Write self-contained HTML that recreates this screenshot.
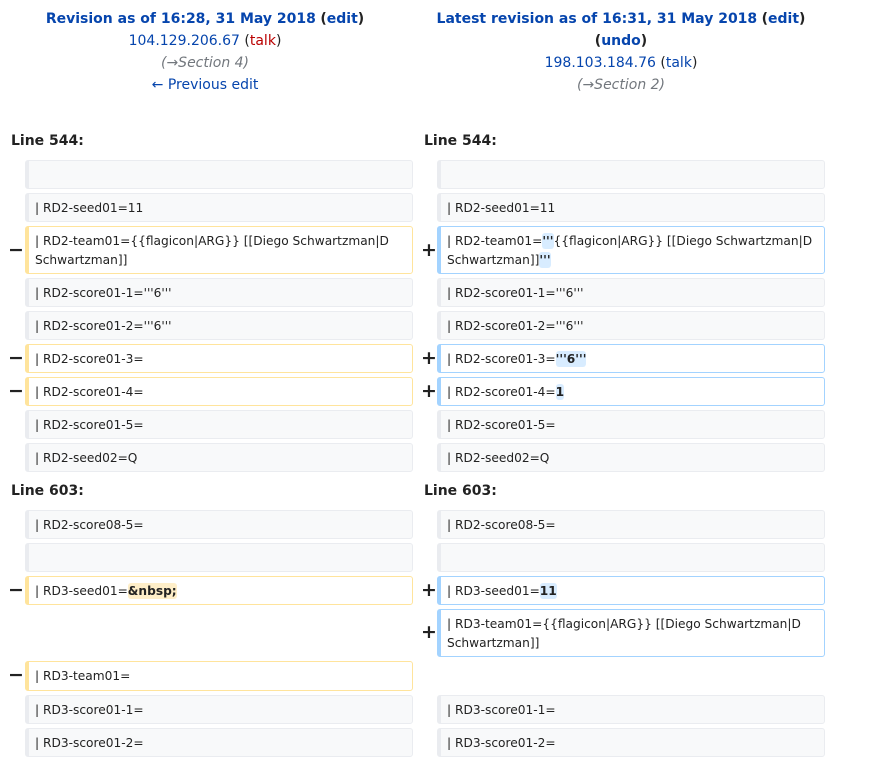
<!DOCTYPE html>
<html><head><meta charset="utf-8"><style>
body{margin:0;width:874px;height:761px;background:#fff;font-family:"DejaVu Sans","Liberation Sans",sans-serif;color:#222;position:relative;overflow:hidden}
.h{position:absolute;text-align:center;font-size:14px;line-height:22px;width:420px}
.h b{color:#0645ad}
a{color:#0645ad;text-decoration:none}
.red{color:#ba0000}
.i{font-style:italic;color:#72777d}
.ln{position:absolute;font-weight:bold;font-size:14px}
.b{position:absolute;box-sizing:border-box;width:388px;border:1px solid #eaecf0;border-left-width:4px;border-radius:3px;background:#f8f9fa;font-size:12.2px;line-height:19px;padding:5px 0 0 6px;color:#222}
.l{left:25px}.r{left:437px}
.d{border-color:#ffe49c;background:#fff}
.a{border-color:#a3d3ff;background:#fff}
.ma{background:#d8ecff;font-weight:bold;border-radius:3px;padding:1px 0}
.md{background:#feeec8;font-weight:bold;border-radius:3px;padding:1px 0}
.m{position:absolute;font-weight:bold;font-size:19px;line-height:19px}
</style></head><body>
<div class="h" style="left:-5px;top:8px"><b>Revision as of 16:28, 31 May 2018</b> <b style="color:#222">(<a>edit</a>)</b><br><a>104.129.206.67</a> (<span class="red">talk</span>)<br><span class="i">(→Section 4)</span><br><a>← Previous edit</a></div>
<div class="h" style="left:411px;top:8px"><b>Latest revision as of 16:31, 31 May 2018</b> <b style="color:#222">(<a>edit</a>)<br>(<a>undo</a>)</b><br><a>198.103.184.76</a> (<a>talk</a>)<br><span class="i">(→Section 2)</span></div>

<div class="ln" style="left:11px;top:133px">Line 544:</div>
<div class="ln" style="left:424px;top:133px">Line 544:</div>
<div class="ln" style="left:11px;top:483px">Line 603:</div>
<div class="ln" style="left:424px;top:483px">Line 603:</div>

<div class="b l" style="top:160px;height:29px"></div><div class="b r" style="top:160px;height:29px"></div>
<div class="b l" style="top:193px;height:29px">| RD2-seed01=11</div><div class="b r" style="top:193px;height:29px">| RD2-seed01=11</div>
<div class="m" style="left:8px;top:241px">−</div><div class="b l d" style="top:226px;height:48px">| RD2-team01={{flagicon|ARG}} [[Diego Schwartzman|D Schwartzman]]</div>
<div class="m" style="left:421px;top:241px">+</div><div class="b r a" style="top:226px;height:48px">| RD2-team01=<span class="ma">'''</span>{{flagicon|ARG}} [[Diego Schwartzman|D Schwartzman]]<span class="ma">'''</span></div>
<div class="b l" style="top:278px;height:29px">| RD2-score01-1='''6'''</div><div class="b r" style="top:278px;height:29px">| RD2-score01-1='''6'''</div>
<div class="b l" style="top:311px;height:29px">| RD2-score01-2='''6'''</div><div class="b r" style="top:311px;height:29px">| RD2-score01-2='''6'''</div>
<div class="m" style="left:8px;top:349px">−</div><div class="b l d" style="top:344px;height:29px">| RD2-score01-3=</div>
<div class="m" style="left:421px;top:349px">+</div><div class="b r a" style="top:344px;height:29px">| RD2-score01-3=<span class="ma">'''6'''</span></div>
<div class="m" style="left:8px;top:382px">−</div><div class="b l d" style="top:377px;height:29px">| RD2-score01-4=</div>
<div class="m" style="left:421px;top:382px">+</div><div class="b r a" style="top:377px;height:29px">| RD2-score01-4=<span class="ma">1</span></div>
<div class="b l" style="top:410px;height:29px">| RD2-score01-5=</div><div class="b r" style="top:410px;height:29px">| RD2-score01-5=</div>
<div class="b l" style="top:443px;height:29px">| RD2-seed02=Q</div><div class="b r" style="top:443px;height:29px">| RD2-seed02=Q</div>

<div class="b l" style="top:510px;height:29px">| RD2-score08-5=</div><div class="b r" style="top:510px;height:29px">| RD2-score08-5=</div>
<div class="b l" style="top:543px;height:29px"></div><div class="b r" style="top:543px;height:29px"></div>
<div class="m" style="left:8px;top:581px">−</div><div class="b l d" style="top:576px;height:29px">| RD3-seed01=<span class="md">&amp;nbsp;</span></div>
<div class="m" style="left:421px;top:581px">+</div><div class="b r a" style="top:576px;height:29px">| RD3-seed01=<span class="ma">11</span></div>
<div class="m" style="left:421px;top:623px">+</div><div class="b r a" style="top:609px;height:48px">| RD3-team01={{flagicon|ARG}} [[Diego Schwartzman|D Schwartzman]]</div>
<div class="m" style="left:8px;top:666px">−</div><div class="b l d" style="top:661px;height:30px">| RD3-team01=</div>
<div class="b l" style="top:695px;height:29px">| RD3-score01-1=</div><div class="b r" style="top:695px;height:29px">| RD3-score01-1=</div>
<div class="b l" style="top:728px;height:29px">| RD3-score01-2=</div><div class="b r" style="top:728px;height:29px">| RD3-score01-2=</div>
</body></html>
